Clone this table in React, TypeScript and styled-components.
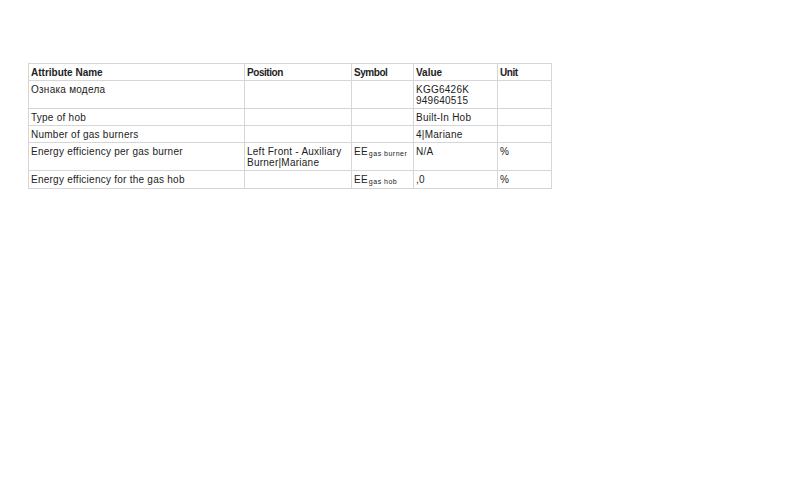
import React from "react";
import styled, { createGlobalStyle } from "styled-components";

const Global = createGlobalStyle`
  html, body { margin: 0; padding: 0; background: #ffffff; }
  body { font-family: "Liberation Sans", Arial, sans-serif; }
`;

const Page = styled.div`
  padding: 63px 0 0 28px;
`;

const Table = styled.table`
  border-collapse: collapse;
  table-layout: fixed;
  width: 523px;
  font-family: "Liberation Sans", Arial, sans-serif;
  color: #222222;
`;

const HeadCell = styled.th<{ $tight?: boolean }>`
  border: 1px solid #d6d6d6;
  padding: 3px 3px 2px 2px;
  font-size: 10px;
  line-height: 11px;
  font-weight: bold;
  text-align: left;
  vertical-align: top;
  letter-spacing: ${(p) => (p.$tight ? "-0.45px" : "0")};
`;

const Cell = styled.td`
  border: 1px solid #d6d6d6;
  padding: 3px 3px 2px 2px;
  font-size: 10px;
  line-height: 11px;
  letter-spacing: 0.25px;
  vertical-align: top;
  white-space: pre-line;
`;

const Sub = styled.span`
  font-size: 7px;
  letter-spacing: 0.5px;
  position: relative;
  top: 1px;
  margin-left: 1px;
`;

type Row = {
  name: string;
  position: string;
  symbol?: [string, string];
  value: string;
  unit: string;
};

const rows: Row[] = [
  { name: "Ознака модела", position: "", value: "KGG6426K\n949640515", unit: "" },
  { name: "Type of hob", position: "", value: "Built-In Hob", unit: "" },
  { name: "Number of gas burners", position: "", value: "4|Mariane", unit: "" },
  {
    name: "Energy efficiency per gas burner",
    position: "Left Front - Auxiliary\nBurner|Mariane",
    symbol: ["EE", "gas burner"],
    value: "N/A",
    unit: "%",
  },
  {
    name: "Energy efficiency for the gas hob",
    position: "",
    symbol: ["EE", "gas hob"],
    value: ",0",
    unit: "%",
  },
];

export default function App() {
  return (
    <>
      <Global />
      <Page>
        <Table>
          <colgroup>
            <col style={{ width: 216 }} />
            <col style={{ width: 107 }} />
            <col style={{ width: 62 }} />
            <col style={{ width: 84 }} />
            <col style={{ width: 54 }} />
          </colgroup>
          <thead>
            <tr>
              <HeadCell>Attribute Name</HeadCell>
              <HeadCell $tight>Position</HeadCell>
              <HeadCell $tight>Symbol</HeadCell>
              <HeadCell>Value</HeadCell>
              <HeadCell $tight>Unit</HeadCell>
            </tr>
          </thead>
          <tbody>
            {rows.map((r) => (
              <tr key={r.name}>
                <Cell>{r.name}</Cell>
                <Cell>{r.position}</Cell>
                <Cell>
                  {r.symbol ? (
                    <>
                      {r.symbol[0]}
                      <Sub>{r.symbol[1]}</Sub>
                    </>
                  ) : null}
                </Cell>
                <Cell>{r.value}</Cell>
                <Cell>{r.unit}</Cell>
              </tr>
            ))}
          </tbody>
        </Table>
      </Page>
    </>
  );
}
